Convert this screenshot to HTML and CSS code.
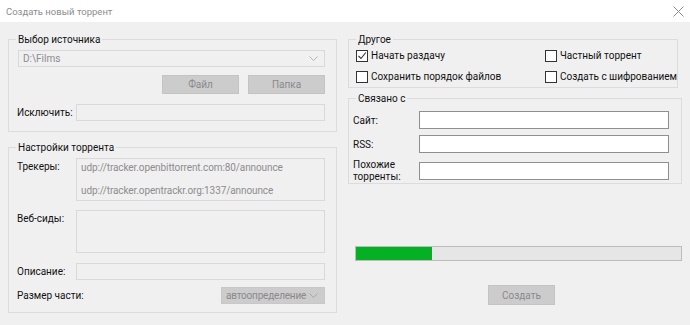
FILE: index.html
```html
<!DOCTYPE html>
<html lang="ru">
<head>
<meta charset="utf-8">
<title>Создать новый торрент</title>
<link rel="stylesheet" href="styles.css">
</head>
<body>
<div class="titlebar">
  <span class="title">Создать новый торрент</span>
  <svg class="close" width="11" height="11" viewBox="0 0 11 11"><path d="M0.5 0.5L10.5 10.5M10.5 0.5L0.5 10.5" stroke="#8a8a8a" stroke-width="1" fill="none"/></svg>
</div>
<div class="main">
  <div class="col left">
    <fieldset class="group g-source">
      <legend>Выбор источника</legend>
      <div class="combo path"><span>D:\Films</span><svg class="arrow" width="9" height="5" viewBox="0 0 9 5"><path d="M0.5 0.5L4.5 4.5L8.5 0.5" stroke="#b5b5b5" fill="none"/></svg></div>
      <div class="buttons">
        <div class="btn">Файл</div>
        <div class="btn">Папка</div>
      </div>
      <div class="row exclude">
        <span class="lbl">Исключить:</span>
        <div class="field dis"></div>
      </div>
    </fieldset>
    <fieldset class="group g-settings">
      <legend>Настройки торрента</legend>
      <div class="row top">
        <span class="lbl">Трекеры:</span>
        <div class="area dis trackers">
          <div>udp://tracker.openbittorrent.com:80/announce</div>
          <div>udp://tracker.opentrackr.org:1337/announce</div>
        </div>
      </div>
      <div class="row top seeds">
        <span class="lbl">Веб-сиды:</span>
        <div class="area dis"></div>
      </div>
      <div class="row desc">
        <span class="lbl">Описание:</span>
        <div class="field dis"></div>
      </div>
      <div class="row piece">
        <span class="lbl">Размер части:</span>
        <div class="combo size"><span>автоопределение</span><svg class="arrow" width="9" height="5" viewBox="0 0 9 5"><path d="M0.5 0.5L4.5 4.5L8.5 0.5" stroke="#a8a8a8" fill="none"/></svg></div>
      </div>
    </fieldset>
  </div>
  <div class="col right">
    <fieldset class="group g-other">
      <legend>Другое</legend>
      <div class="checks">
        <label class="chk"><span class="box checked"><svg width="10" height="10" viewBox="0 0 10 10"><path d="M1.5 5L4 7.5L8.8 1.5" stroke="#333" stroke-width="1.1" fill="none"/></svg></span>Начать раздачу</label>
        <label class="chk"><span class="box"></span>Частный торрент</label>
        <label class="chk"><span class="box"></span>Сохранить порядок файлов</label>
        <label class="chk"><span class="box"></span>Создать с шифрованием</label>
      </div>
    </fieldset>
    <fieldset class="group g-link">
      <legend>Связано с</legend>
      <div class="lrow r1"><span class="lbl">Сайт:</span><div class="field en"></div></div>
      <div class="lrow r2"><span class="lbl">RSS:</span><div class="field en"></div></div>
      <div class="lrow r3"><span class="lbl two">Похожие<br>торренты:</span><div class="field en"></div></div>
    </fieldset>
    <div class="progress"><div class="fill" style="width:76px"></div></div>
    <div class="create-wrap"><div class="btn create">Создать</div></div>
  </div>
</div>
</body>
</html>
```
FILE: styles.css
```css
* { box-sizing: border-box; }
html, body { margin: 0; padding: 0; }
body {
  width: 690px;
  height: 325px;
  overflow: hidden;
  background: #f0f0f0;
  font-family: Roboto, "Noto Sans", sans-serif;
  font-size: 10px;
  color: #111111;
}
.titlebar {
  height: 22px;
  background: #ffffff;
  display: flex;
  align-items: center;
  justify-content: space-between;
  padding: 0 4px 0 6px;
}
.title { color: #8c8c8c; font-size: 9.5px; }
.close { margin-right: 2px; }

.main {
  display: flex;
  gap: 11px;
  padding: 10px 8px 0 8px;
}
.col { display: flex; flex-direction: column; }
.left { width: 329px; }
.right { width: 334px; }

.group {
  margin: 0;
  border: 1px solid #dcdcdc;
  min-width: 0;
}
.group legend {
  padding: 0 2px;
  line-height: 15px;
  color: #111111;
}

.g-source { padding: 0 11px 9px 7px; height: 100px; }
.combo {
  height: 17px;
  display: flex;
  align-items: center;
  justify-content: space-between;
  padding: 0 6px 0 4px;
}
.combo.path {
  margin: 3px 0 0 2px;
  border: 1px solid #d9d9d9;
  background: #f0f0f0;
  color: #8d8d8d;
}
.buttons {
  display: flex;
  justify-content: flex-end;
  gap: 9px;
  margin-top: 8px;
}
.btn {
  width: 77px;
  height: 19px;
  background: #cccccc;
  border: 1px solid #c4c4c4;
  color: #8a8a8a;
  display: flex;
  align-items: center;
  justify-content: center;
}
.row { display: flex; align-items: center; }
.row.top { align-items: flex-start; }
.lbl { width: 60px; flex: none; padding-left: 1px; white-space: nowrap; }
.row .field, .row .area { flex: 1; }
.exclude { margin-top: 10px; }
.field { height: 17px; }
.field.dis, .area.dis {
  border: 1px solid #d9d9d9;
  background: #f0f0f0;
}
.g-settings { margin-top: 8px; padding: 0 11px 7px 7px; height: 173px; }
.g-settings .row.top .lbl { padding-top: 3px; }
.area { height: 43px; }
.trackers {
  color: #8d8d8d;
  padding: 0 0 0 4px;
  line-height: 18px;
  display: flex;
  flex-direction: column;
  gap: 5px;
  white-space: nowrap;
  letter-spacing: -0.1px;
}
.g-settings > .row:first-of-type { margin-top: 3px; }
.seeds { margin-top: 9px; }
.desc { margin-top: 10px; }
.piece { margin-top: 7px; justify-content: space-between; }
.piece .lbl { width: auto; }
.combo.size {
  width: 104px;
  background: #cccccc;
  border: 1px solid #c8c8c8;
  color: #8a8a8a;
  padding: 0 6px 0 4px;
  letter-spacing: -0.2px;
}

.g-other { padding: 0 4px 6px 7px; margin-right: 4px; height: 56px; }
.checks {
  display: grid;
  grid-template-columns: 189px auto;
  row-gap: 6px;
  margin-top: 1px;
}
.chk { display: flex; align-items: center; height: 15px; white-space: nowrap; }
.box {
  width: 12px;
  height: 12px;
  border: 1px solid #333333;
  background: #ffffff;
  margin-right: 3px;
  flex: none;
  display: flex;
  align-items: center;
  justify-content: center;
}

.g-link { margin-top: 3px; padding: 0 12px 4px 3px; height: 93px; }
.g-link legend { margin-left: 4px; }
.lrow { display: flex; align-items: center; }
.lrow .lbl { width: 67px; }
.lrow .field { flex: 1; }
.field.en {
  height: 18px;
  background: #ffffff;
  border: 1px solid #8f8f8f;
}
.r1 { margin-top: 5px; }
.r2 { margin-top: 6px; }
.r3 { margin-top: 6px; }
.lbl.two { line-height: 12px; }

.progress {
  margin: 62px 0 0 7px;
  height: 15px;
  background: #e6e6e6;
  border: 1px solid #bcbcbc;
}
.progress .fill { height: 100%; background: #06b025; }
.create-wrap { display: flex; padding-left: 140px; margin-top: 24px; }
.btn.create { width: 67px; height: 20px; }
```
